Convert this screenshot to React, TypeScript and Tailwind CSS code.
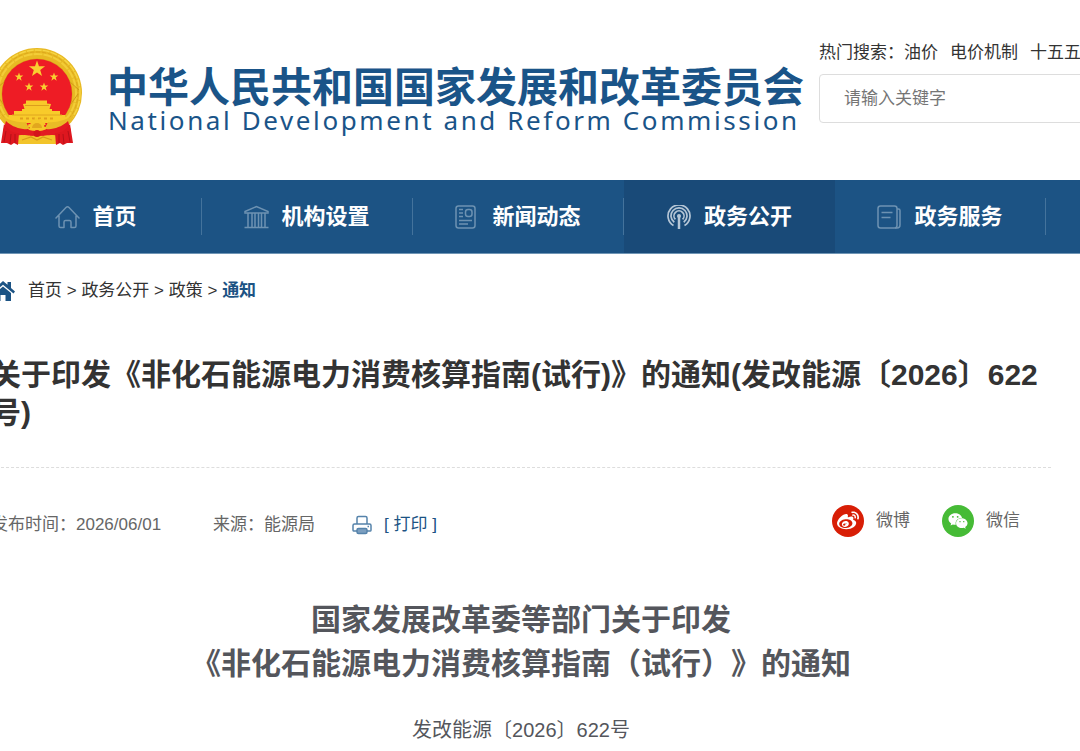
import { FaWeibo, FaWeixin } from "react-icons/fa";

const starPoints = (cx: number, cy: number, r: number) => {
  const points: string[] = [];
  for (let i = 0; i < 10; i++) {
    const radius = i % 2 === 0 ? r : r * 0.4;
    const angle = -Math.PI / 2 + (i * Math.PI) / 5;
    points.push(`${cx + radius * Math.cos(angle)},${cy + radius * Math.sin(angle)}`);
  }
  return points.join(" ");
};

const Emblem = () => (
  <svg viewBox="0 0 90 100" className="h-[100px] w-[90px] shrink-0" aria-hidden="true">
    {/* wheat ring */}
    <circle cx="45" cy="46" r="45" fill="#e8b923" />
    <circle cx="45" cy="46" r="43" fill="none" stroke="#f6d544" strokeWidth="1.5" strokeDasharray="7 1" />
    <circle cx="45" cy="46" r="39" fill="none" stroke="#f3cd38" strokeWidth="2" strokeDasharray="9 1" />
    <circle cx="45" cy="46" r="41" fill="none" stroke="#d9a51c" strokeWidth="0.8" strokeDasharray="4 2" />
    <path d="M76 61l10-14M77 34l10 9M14 61L4 47M13 34L3 43" stroke="#d19a18" strokeWidth="1" />
    <circle cx="45" cy="47" r="35.5" fill="#d9a11a" />
    <circle cx="45" cy="47" r="35" fill="#ee1c25" />
    <g fill="#f9d030">
      <polygon points={starPoints(45, 22, 8.5)} />
      <polygon points={starPoints(27, 30, 4.5)} />
      <polygon points={starPoints(62, 30, 4.5)} />
      <polygon points={starPoints(37, 40, 4.5)} />
      <polygon points={starPoints(52, 40, 4.5)} />
    </g>
    {/* gate */}
    <path d="M34 53.5h21v3l4 .5-1.500 5h-25L31 57l3-.5z" fill="#f8c92a" />
    <path d="M33 58.500h24" stroke="#dc9f1c" strokeWidth="1" />
    <path d="M30 62h30v2h8v4h5v2l4 1c-3 4-7 6-12 5H24c-5 1-9-1-11-5l4-1v-2h5v-4h8z" fill="#f8cb2a" />
    <path d="M20 68h50" stroke="#e0a61e" strokeWidth="1" />
    <path d="M28 71.500h34" stroke="#dfa01c" strokeWidth="2" strokeDasharray="3 3" />
    {/* lower wheat, red ribbon and drapes */}
    <path d="M8 68c8 5 18 8 26 7l5 10-6 2C21 84 11 79 8 68zM82 68c-8 5-18 8-26 7l-5 10 6 2c12-3 22-8 25-19z" fill="#e9bb26" />
    <path d="M26 85h39v12H26z" fill="#f2c42a" />
    <path d="M14 74c4 4 10 7 17 8 6 1 8-1 14-1s8 2 14 1c7-1 13-4 17-8l3 10c-5 4-11 5-18 4-6 0-9 1-16 1s-10-1-16-1c-7 1-13 0-18-4z" fill="#e31a22" />
    <path d="M12 77c5 7 9 9 15 9l-1 12-4-2-3 2-4-2-6 0zM78 77c-5 7-9 9-15 9l1 12 4-2 3 2 4-2 6 0z" fill="#de171f" />
    <path d="M14 84l-2 11M19 87l-1 10M23 87v9M76 84l2 11M71 87l1 10M67 87v9" stroke="#b01017" strokeWidth="0.9" />
    <circle cx="45" cy="80" r="8" fill="none" stroke="#f5c828" strokeWidth="2" strokeDasharray="3 2" />
    <circle cx="45" cy="80" r="7.500" fill="#f5c828" />
    <path d="M40 81a5 5 0 0 1 10 0z" fill="#e2a71e" />
    <path d="M35 82.500c5 1 7 1.500 10 1.500s5-.5 10-1.500l-3 6H38z" fill="#e31a22" />
    <circle cx="45" cy="86.500" r="3.500" fill="#d4131b" />
    <path d="M30 93l9-3 6 3 6-3 9 3" fill="none" stroke="#d99b1a" strokeWidth="1.200" />
  </svg>
);

const HomeIcon = () => (
  <svg viewBox="0 0 25 24" className="h-6 w-[25px]" fill="none" stroke="currentColor" strokeWidth="1.5" strokeLinecap="round" strokeLinejoin="round">
    <path d="M1 13L11 2.500q1.500-1.500 3 0L24 13M4 11v10q0 1.500 1.500 1.500H9V17q0-1.500 1.500-1.500h4q1.500 0 1.500 1.500v5.500h3.500q1.500 0 1.500-1.500V11" />
  </svg>
);

const BankIcon = () => (
  <svg viewBox="0 0 25 24" className="h-6 w-[25px]" fill="none" stroke="currentColor" strokeWidth="1.5">
    <path d="M1 6.500L12.500 1.500 24 6.500V8H1zM4 8v14M8 8v14M11 8v14M14.500 8v14M17.500 8v14M21 8v14M.500 22.500h24" />
  </svg>
);

const NewsIcon = () => (
  <svg viewBox="0 0 25 24" className="h-6 w-[25px]" fill="none" stroke="currentColor" strokeWidth="1.500">
    <rect x="1" y="1" width="19" height="22" rx="2.500" />
    <rect x="10.500" y="4.500" width="6.500" height="7" rx="2.500" />
    <path d="M4 4.500h4M4 8h4M4 11.500h4M4 15.500h13M4 19h9" />
  </svg>
);

const BroadcastIcon = () => (
  <svg viewBox="0 0 25 24" className="h-6 w-[25px]" fill="none" stroke="currentColor" strokeWidth="1.700">
    <path d="M6.500 20.500A11 11 0 1 1 17.500 20.500M7.300 17.300A8 8 0 1 1 16.700 17.300M8.400 14.400A5 5 0 1 1 15.600 14.400" />
    <circle cx="12" cy="11" r="2" fill="currentColor" stroke="none" />
    <path d="M12 11v13" strokeWidth="2.500" />
  </svg>
);

const ServiceIcon = () => (
  <svg viewBox="0 0 25 24" className="h-6 w-[25px]" fill="none" stroke="currentColor" strokeWidth="1.500">
    <rect x="1" y="1" width="19" height="22" rx="2.500" />
    <path d="M20 4h1.500Q23 4 23 5.500V20q0 3-3 3h-2M4.500 7.500h11M4.500 12.500h9" />
  </svg>
);

const PrintIcon = () => (
  <svg viewBox="0 0 20 20" className="size-5" fill="none" stroke="#5583ab" strokeWidth="1.500">
    <path d="M5 9V3q0-1.500 1.500-1.500h7Q15 1.500 15 3v6M5 16H1.500q-.500 0-.500-1v-4.500Q1 9 2.500 9h15q1.500 0 1.500 1.500V15q0 1-.500 1H15" />
    <rect x="5" y="13.500" width="10" height="5" rx="1.500" fill="#7c9fc0" />
    <path d="M15.500 11.500h1.500" />
  </svg>
);

const navItems = [
  { label: "首页", icon: <HomeIcon /> },
  { label: "机构设置", icon: <BankIcon /> },
  { label: "新闻动态", icon: <NewsIcon /> },
  { label: "政务公开", icon: <BroadcastIcon />, active: true },
  { label: "政务服务", icon: <ServiceIcon /> },
];

const hotWords = ["油价", "电价机制", "十五五"];
const crumbs = ["首页", "政务公开", "政策"];

const Header = () => (
  <header className="-ml-2 flex h-[180px] items-start">
    <div className="flex shrink-0 gap-[25px] pt-[47px]">
      <Emblem />
      <div className="w-[712px] pt-[21px] whitespace-nowrap text-[#1a5488]">
        <p className="text-[41px] leading-10 font-bold">中华人民共和国国家发展和改革委员会</p>
        <p className="pl-px font-['Noto_Sans'] text-[26px] leading-6 tracking-widest">
          National Development and Reform Commission
        </p>
      </div>
    </div>
    <form className="-mr-4 min-w-0 flex-1 pt-[41px]" onSubmit={(e) => e.preventDefault()}>
      <div className="flex gap-3 text-[17px] leading-6 whitespace-nowrap text-[#333]">
        <label htmlFor="keyword" className="-mr-3">热门搜索：</label>
        {hotWords.map((word) => (
          <a key={word} href="#">{word}</a>
        ))}
      </div>
      <input
        id="keyword"
        type="text"
        placeholder="请输入关键字"
        className="mt-[9px] h-[49px] w-full rounded border border-[#ddd] px-6 text-[17px] placeholder:text-[#757575]"
      />
    </form>
  </header>
);

const Nav = () => (
  <nav className="border-b border-[#6f95b5] bg-[#1c5384]">
    <ul className="-ml-[9px] flex h-[73px]">
      {navItems.map((item) => (
        <li
          key={item.label}
          className={`flex w-[211px] shrink-0 items-center ${item.active ? "bg-[#194a78]" : ""}`}
        >
          <a href="#" className="flex flex-1 items-center justify-center gap-3 text-[22px] leading-8 font-bold text-white">
            <span className={item.active ? "text-[#b5c6d6]" : "text-[#6d92b2]"}>{item.icon}</span>
            {item.label}
          </a>
          {!item.active && <span className="h-[37px] w-px bg-[#44739c]" />}
        </li>
      ))}
    </ul>
  </nav>
);

const Breadcrumb = () => (
  <div className="flex h-[74px] items-center gap-[13px] text-[17px] leading-6 text-[#333]">
    <svg viewBox="0 0 24 22" className="h-[22px] w-6" fill="#1c5384" aria-hidden="true">
      <path d="M12 1l4.500 3.800V2h3.500v6l4 3.500-1.500 2L12 4.800 1.500 13.500 0 11.500zM12 6.500l8 6.500v8h-5.500v-6h-5v6H4v-8z" />
    </svg>
    <p>
      {crumbs.map((crumb) => (
        <span key={crumb}>
          <a href="#">{crumb}</a>
          {" > "}
        </span>
      ))}
      <a href="#" className="font-bold text-[#1c5384]">通知</a>
    </p>
  </div>
);

const App = () => {
  return (
    <div className="min-h-screen overflow-hidden bg-white font-['Liberation_Sans','Noto_Sans_CJK_SC',sans-serif] [text-spacing-trim:space-all]">
      <Header />
      <Nav />
      <main className="-ml-[9px] mr-[29px]">
        <Breadcrumb />
        <h1 className="border-b border-dashed border-[#ddd] pt-7 pb-[35px] text-[30px] leading-[38px] font-bold text-[#333]">
          关于印发《非化石能源电力消费核算指南(试行)》的通知(发改能源〔2026〕622号)
        </h1>
        <div className="flex items-center justify-between pt-[33px] pr-[31px] text-[17px] leading-8 text-[#666]">
          <div className="flex items-center pt-2">
            <span className="w-[222px]">发布时间：2026/06/01</span>
            <span className="w-[139px]">来源：能源局</span>
            <button type="button" className="flex cursor-pointer items-center gap-3 text-[#1c5384]">
              <PrintIcon />
              [ 打印 ]
            </button>
          </div>
          <div className="flex gap-8">
            <a href="#" className="flex items-center gap-3">
              <span className="flex size-8 items-center justify-center rounded-full bg-[#d81e06] text-white">
                <FaWeibo className="size-[22px]" />
              </span>
              微博
            </a>
            <a href="#" className="flex items-center gap-3">
              <span className="flex size-8 items-center justify-center rounded-full bg-[#46bb36] text-white">
                <FaWeixin className="size-5" />
              </span>
              微信
            </a>
          </div>
        </div>
        <article className="pt-[57px] text-center text-[#54565c]">
          <h2 className="text-[30px] leading-[44px] font-bold">
            国家发展改革委等部门关于印发
            <br />
            《非化石能源电力消费核算指南（试行）》的通知
          </h2>
          <p className="pt-7 text-[20px] leading-8">发改能源〔2026〕622号</p>
        </article>
      </main>
    </div>
  );
};

export default App;
